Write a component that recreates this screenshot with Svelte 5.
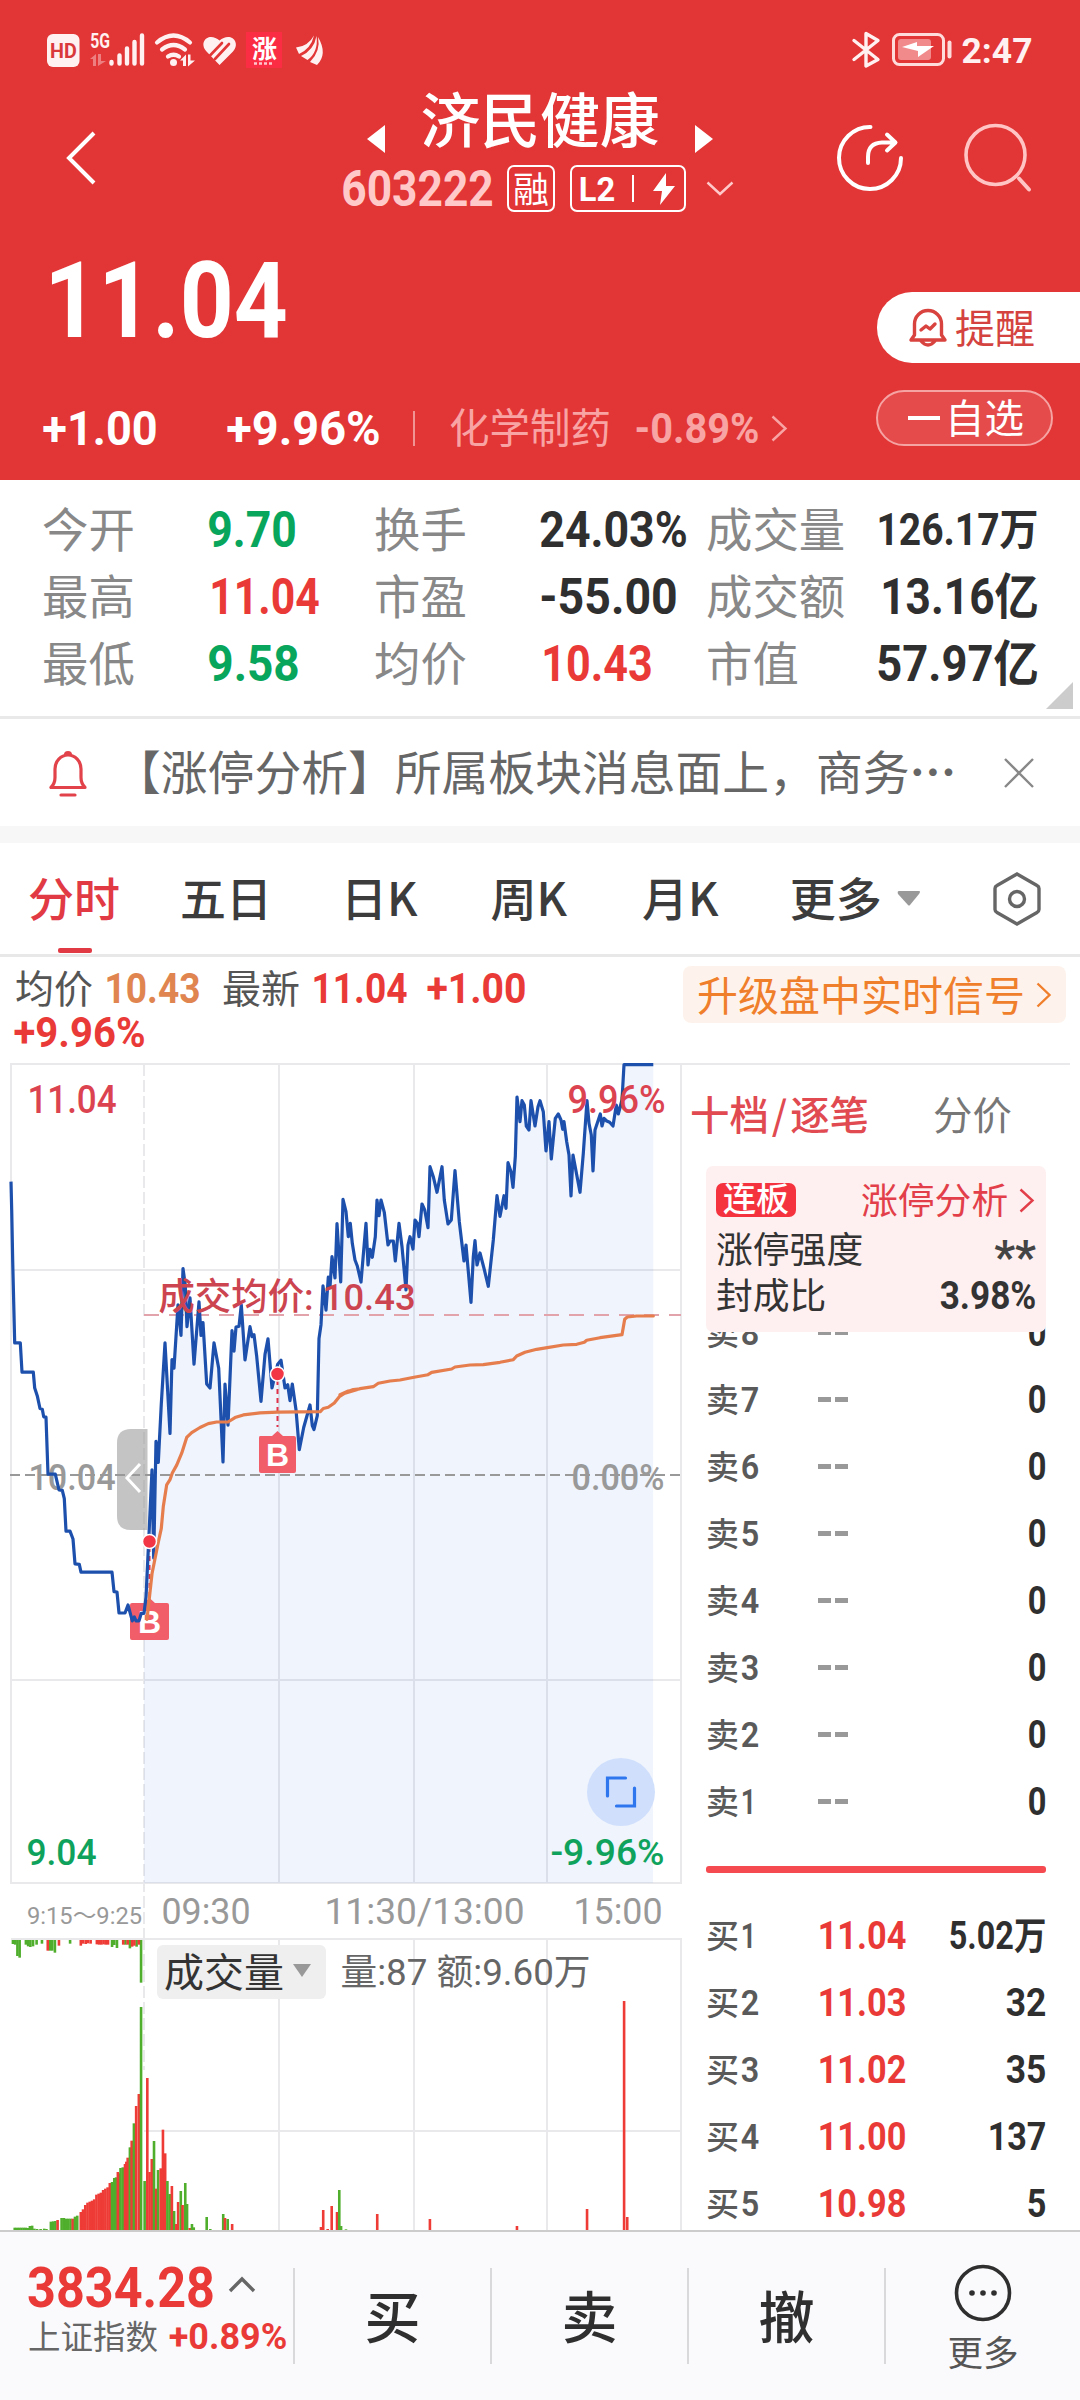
<script>
  const stats = [
    ['今开', '9.70', 86, 'down', '换手', '24.03%', 145, '', '成交量', '126.17万', 159, 31],
    ['最高', '11.04', 107, 'up one', '市盈', '-55.00', 135, '', '成交额', '13.16亿', 155, 35],
    ['最低', '9.58', 89, 'down', '均价', '10.43', 108, 'up one', '市值', '57.97亿', 159, 35]
  ];

  const asks = [8, 7, 6, 5, 4, 3, 2, 1];
  const bids = [
    [1, '11.04', '5.02万', 95],
    [2, '11.03', '32', 38],
    [3, '11.02', '35', 38],
    [4, '11.00', '137', 56],
    [5, '10.98', '5', 17]
  ];

  // Opening call auction and morning session, in plot units (x / 3, y / 2.529)
  const early =
    '33,358 35,430 38,560 44,766 61,766 66,840 100,840 104,880 112,900 120,932 127,934 131,953 138,954 144,1098 166,1098 177,1138 187,1139 193,1160 198,1242 210,1242 219,1262 225,1325 238,1326 243,1346 336,1346 342,1395 351,1396 357,1449 375,1449 384,1429 397,1469 403,1459 408,1469 417,1469 424,1450 432,1450';
  const morning =
    '438,1409 447,1250 456,1087 461,1310 468,1015 475,1068 484,920 495,766 510,995 516,808 522,830 534,670 543,747 549,578 556,620 561,725 570,652 582,820 597,662 603,747 609,715 620,870 630,880 642,766 656,830 669,1067 675,870 684,974 696,735 702,787 708,726 717,724 724,670 735,809 750,725 756,750 762,745 770,800 783,914 795,795 804,756 816,880 833,820 843,810 855,880 863,872 870,912 877,870 888,935 898,1036 911,980 930,923 937,975 942,985 952,950 957,755 963,720 969,622 978,683 985,600 990,625 996,548 1005,602 1011,464 1022,612 1029,403';
  const late =
    '138,515 145,590 151,550 157,610 165,660 172,678 183,726 198,550 204,675 210,628 217,652 226,590 231,480 237,527 243,480 253,517 264,615 270,603 280,603 286,663 297,550 306,620 318,750 324,615 330,590 339,627 345,540 352,550 357,590 366,492 374,510 384,563 390,380 400,410 411,457 426,380 433,480 444,552 454,540 465,392 478,545 492,663 498,615 513,787 520,650 525,602 531,675 540,639 552,685 565,739 580,600 591,467 600,529 612,467 618,505 624,368 633,395 639,442 646,350 651,171 660,245 666,182 673,195 679,258 687,270 693,182 705,258 714,200 720,182 730,215 738,333 747,245 754,357 766,235 775,222 783,240 788,268 792,245 800,305 807,345 813,468 819,345 840,457 850,340 861,182 867,250 874,285 879,393 885,270 901,222 906,258 912,235 920,243 929,247 939,258 949,195 955,222 966,180 972,74 1060,74';
  const avgA =
    '441,1465 456,1350 475,1270 484,1235 490,1180 500,1125 510,1112 517,1095 530,1075 545,1045 560,1005 575,993 600,980 625,970 650,966 684,966 705,955 730,948 780,943 833,941 961,940 970,932 985,929 1003,918 1018,902 1040,890 1060,884 1080,882';
  const avgB =
    '120,1064 145,1053 180,1046 220,1040 235,1030 270,1023 300,1020 342,1012 384,1004 395,997 455,987 465,981 510,975 550,974 600,967 640,959 650,948 675,937 710,928 742,923 790,915 830,913 853,907 860,901 900,893 966,884 974,838 982,831 1010,828 1060,828';

  const conv = (s, ox, kx, ky) =>
    s.split(' ').map((p) => {
      const [x, y] = p.split(',').map(Number);
      return `${(ox + x / kx).toFixed(1)},${(1040 + y / ky).toFixed(1)}`;
    });
  const A = (s) => conv(s, 0, 3, 2.529);
  const B = (s) => conv(s, 300, 3, 3);
  const session = [...A(morning), ...B(late)];
  const price = [...A(early), ...session].join(' ');
  const area = ['144,1883', '144,1613', ...session, '653,1883'].join(' ');
  const avg = [...A(avgA), ...B(avgB)].join(' ');

  // Volume bars: position, top, colour
  const bars = [];
  const add = (c, list) => list.split(' ').forEach((p) => {
    const [x, y] = p.split(',').map(Number);
    bars.push({ x: x / 2.24, y: 1860 + y / 3, c });
  });
  add('g', '33,1103 38,1103 43,1103 48,1103 53,1103 58,1103 63,1104 67,1098 72,1097 77,1106 83,1107 91,1107 99,1106 104,1107 114,1085 119,1084 124,1083 138,1074 143,1074 148,1076 153,1076 158,1076 168,1070 173,1067');
  add('r', '129,1080 163,1076 181,1056 186,1048 191,1035 196,1028 201,1025 206,1022 211,1018 216,1004 221,1001 226,998 231,990 236,986 241,982 246,969 264,936 280,912 286,893 295,842 305,738 311,702');
  add('g', '251,966 256,954 260,952 270,924 275,922 291,862 300,790 316,441 324,963');
  add('r', '283,905 268,940 330,654 335,936 340,897 350,986 360,925 365,809 370,880');
  add('g', '345,843 354,930 375,963 380,1002 390,1053 405,993 415,969 419,1032 430,1092 434,1102 463,1071 471,1107 500,1062 510,1077 760,990 764,1098 775,1108');
  add('r', '385,978 395,1092 399,1026 409,1035 425,1104 504,1074 520,1092 719,1101 724,1050 734,1107 743,1038 755,1056 845,1062 963,1077 1158,1098 1315,1047 1398,423 1405,1071');
  bars.sort((a, b) => a.x - b.x);

  // Unmatched auction volume, hanging from the top edge
  const hang = [];
  const addH = (c, list) => list.split(' ').forEach((p) => {
    const [x, y] = p.split(',').map(Number);
    hang.push({ x: x / 2.24, h: (y - 238) / 3, c });
  });
  addH('g', '29,250 34,252 39,286 44,291 58,252 63,257 68,259 74,257 82,252 94,249 112,270 117,270 123,276 157,249 251,259 256,253 262,262 281,252 291,263 306,258 316,366');
  addH('r', '107,270 132,255 181,255 186,249 192,250 197,248 203,249 217,251 222,252 227,252 232,251 237,252 242,252 276,252 286,252 296,258 301,255 311,252');
</script>

{#snippet num(text, w, h, cls = '', weight = 700)}
  {@const b = h * 0.05}
  <svg class="num {cls}" width={w} height={h}>
    <text x={-b} y={h} font-size={h / 0.711} font-weight={weight} textLength={w + 2 * b} lengthAdjust="spacingAndGlyphs">{text}</text>
  </svg>
{/snippet}

{#snippet lab(text, x, w, y, h, cls, weight = 500)}
  <text class="lab {cls}" x={x - h * 0.06} {y} font-size={h / 0.711} font-weight={weight} textLength={w + h * 0.12} lengthAdjust="spacingAndGlyphs">{text}</text>
{/snippet}

{#snippet chev(w, h, cls)}
  <svg class="chev {cls}" width={w} height={h} viewBox="0 0 {w} {h}"><path d="M1.5 1.5L{w - 1.5} {h / 2}L1.5 {h - 1.5}" /></svg>
{/snippet}

<div class="page">
  <header>
    <div class="status">
      <svg width="276" height="36" viewBox="47 32 276 36" fill="#fff1f1">
        <rect x="47" y="34" width="32.500" height="33" rx="6" />
        {@render lab('HD', 51, 25, 58, 15, 'hd', 700)}
        {@render lab('5G', 91, 18, 48, 14.5, 'soft', 700)}
        <g opacity=".4"><path d="M90 59l6-5v12h-3v-7zM98 54h3v7h5l-8 5z" /></g>
        <g stroke="#fff1f1" stroke-width="4.400" stroke-linecap="round">
          <path d="M111.500 62v1.500M119.500 55.500v8M127 48.500v15M134.500 42v21.500M142 35.500v28" />
        </g>
        <g fill="none" stroke="#fff1f1" stroke-width="4.200" stroke-linecap="round">
          <path d="M157 42.500q16.500-14 33 0M162 49.500q11.500-9 23 0M168 56.500q5.500-3.500 11 0" />
        </g>
        <circle cx="173.500" cy="62.500" r="3.500" />
        <path d="M180 60.500l6-6v11.500h-3v-5.500zM188 54.500h2.500v6h4.500l-7 6z" />
        <path d="M219.500 65l-13-13.500C200 44 205 37 211 37q4.500 0 8.500 3.500Q223.500 37 228 37c7 0 11 8 5 14.500z" />
        <path d="M222 43l-12 12.500M229 44l-14 15" stroke="#e23536" stroke-width="2.600" stroke-linecap="round" />
        <rect x="246" y="32" width="36" height="36" fill="#fb2d44" />
        <text x="252" y="58" class="app" font-size="25" font-weight="700">涨</text>
        <path d="M254 63.500h20" stroke="#ffc6cc" stroke-width="2.500" stroke-dasharray="3 2" />
        <path d="M296 47.500q12-1 18-12-3 13-15 18.500zM301 56q13-6 15.500-20 2 16-9 24zM310 62q11-11 8-25 10 17-1 28z" />
      </svg>
      <svg width="180" height="36" viewBox="852 32 180 36" fill="none">
        <path d="M854 40.500l24 19-12 6.500V33.500l12 7-24 19" stroke="#fff1f1" stroke-width="3.400" stroke-linejoin="round" stroke-linecap="round" />
        <rect x="893.500" y="34.500" width="50" height="30" rx="6" stroke="#ffdcdc" stroke-width="3" />
        <rect x="898" y="39" width="33" height="21" rx="3" fill="#f18b8b" />
        <path d="M902 47l15-5v4h17l-16 11v-6z" fill="#fff" />
        <path d="M949.500 42.500v14" stroke="#ffdcdc" stroke-width="4" stroke-linecap="round" />
        {@render lab('2:47', 963, 68, 62.5, 24.5, 'soft', 700)}
      </svg>
    </div>

    <div class="nav">
      <svg class="back" width="32" height="56" viewBox="0 0 32 56"><path d="M29 3L4 28l25 25" /></svg>
      <div class="title">
        <div class="name">
          <svg width="20" height="30" viewBox="0 0 20 30"><path d="M19 1v28L1 15z" /></svg>
          <h1>济民健康</h1>
          <svg width="20" height="30" viewBox="0 0 20 30"><path d="M1 1v28l18-14z" /></svg>
        </div>
        <div class="code">
          {@render num('603222', 149, 35, 'pale')}
          <span class="tag rong">融</span>
          <span class="tag l2">
            {@render num('L2', 34, 24)}
            <i></i>
            <svg width="24" height="32" viewBox="0 0 24 32"><path d="M14 0L1 18h9L8 32 23 13h-9z" fill="#fff" /></svg>
          </span>
          <svg class="dd" width="28" height="15" viewBox="0 0 28 15"><path d="M1.500 1.500L14 13 26.500 1.500" /></svg>
        </div>
      </div>
      <svg class="acts" width="196" height="70" viewBox="836 122 196 70" fill="none" stroke-linecap="round" stroke-linejoin="round">
        <path d="M870.500 127A31 31 0 1 0 901 158" stroke="#fff" stroke-width="4" />
        <path d="M868 163v-6q0-14 14-14.500h13M887 134.500l8.500 8-8.500 8" stroke="#fff" stroke-width="4" />
        <circle cx="995.500" cy="155" r="29.500" stroke="#ffc4c4" stroke-width="3.600" />
        <path d="M1019 178.500l10 11" stroke="#ffc4c4" stroke-width="4" />
      </svg>
    </div>

    <div class="quote">
      {@render num('11.04', 236, 75)}
      <div class="alert">
        <svg width="38" height="40" viewBox="0 0 38 40" fill="none" stroke="#d9433f" stroke-width="3.400" stroke-linecap="round" stroke-linejoin="round">
          <path d="M2 32h34l-3.500-5V16a13.500 13.500 0 0 0-27 0v11zM12 33q7 8 14 0M12 22l5-4 4 3 5-5" />
        </svg>
        <span>提醒</span>
      </div>
    </div>

    <div class="change">
      {@render num('+1.00', 112, 34, 'c1')}
      {@render num('+9.96%', 151, 34, 'c2')}
      <i></i>
      <span>化学制药</span>
      {@render num('-0.89%', 122, 30, 'c3')}
      {@render chev(16, 27, 'pinkc')}
      <div class="fav"><b></b><span>自选</span></div>
    </div>
  </header>

  <section class="stats">
    {#each stats as s}
      <span>{s[0]}</span>
      {@render num(s[1], s[2], 35, s[3])}
      <span>{s[4]}</span>
      {@render num(s[5], s[6], 35, s[7])}
      <span>{s[8]}</span>
      {@render num(s[9], s[10], s[11], 'last')}
    {/each}
    <svg class="corner" width="27" height="27"><path d="M27 0v27H0z" /></svg>
  </section>

  <section class="notice">
    <svg width="38" height="48" viewBox="0 0 38 48" fill="none" stroke="#e2434b" stroke-width="3.200" stroke-linejoin="round" stroke-linecap="round">
      <path d="M2 38.500h34q-4-4-4-10V20a13 14 0 0 0-26 0v8.500q0 6-4 10zM16.500 6a2.500 2.500 0 0 1 5 0M12 46h14" />
    </svg>
    <p lang="zh-CN">【涨停分析】所属板块消息面上，商务<b>…</b></p>
    <svg class="x" width="32" height="32" viewBox="0 0 32 32"><path d="M2 2l28 28M30 2L2 30" /></svg>
  </section>

  <nav class="tabs">
    <span class="on">分时</span>
    <span>五日</span>
    <span>日K</span>
    <span>周K</span>
    <span>月K</span>
    <span>更多</span>
    <svg width="24" height="17"><path d="M2 1h20q2 0 0 3l-9 11q-1 1-2 0L1 4q-1-3 1-3z" fill="#999" /></svg>
    <svg class="gear" width="50" height="56" viewBox="0 0 50 56"><path d="M25 3l20 11.500q2 1 2 3v21q0 2-2 3L25 53 5 41.500q-2-1-2-3v-21q0-2 2-3z" /><circle cx="25" cy="28" r="7.500" /></svg>
  </nav>

  <section class="info">
    <div class="line">
      <div class="first">
        <span>均价</span>
        {@render num('10.43', 93, 30, 'orange')}
        <span>最新</span>
        {@render num('11.04', 93, 30, 'up')}
        {@render num('+1.00', 97, 30, 'up plus')}
      </div>
      {@render num('+9.96%', 129, 30, 'up')}
    </div>
    <div class="signal"><span>升级盘中实时信号</span>{@render chev(15, 26, 'orangec')}</div>
  </section>

  <main>
    <div class="charts">
      <svg class="pricechart" width="690" height="878" viewBox="0 1060 690 878">
        <g class="grid">
          <path d="M11 1064H681V1883H11zM144 1270H681M11 1270H144M11 1680H681M279 1064V1883M414 1064V1883M547 1064V1883" />
          <path d="M144 1064V1938" stroke-dasharray="12 4" />
          <path d="M681 1064H1070" />
        </g>
        <polygon points={area} fill="#2c6ae0" fill-opacity=".075" />
        <path d="M10 1475H681" stroke="#999" stroke-width="2" stroke-dasharray="10 5" />
        {@render lab('11.04', 29, 86, 1112.5, 27, 'red')}
        {@render lab('10.04', 30, 84, 1490, 26, 'gray')}
        {@render lab('9.04', 28, 67, 1865, 26, 'green')}
        {@render lab('0.00%', 573, 90, 1490, 26, 'gray')}
        {@render lab('-9.96%', 552, 111, 1865, 26, 'green')}
        <path d="M144 1315H681" stroke="#e3a3aa" stroke-width="2" stroke-dasharray="15 10" />
        <g class="mark">
          <path d="M149.500 1547V1598M277.500 1380V1427" stroke="#e0304a" stroke-width="2" stroke-dasharray="5 4" />
          <path d="M132 1603h12l5.500-5 5.500 5h12q2 0 2 2v33q0 2-2 2h-35q-2 0-2-2v-33q0-2 2-2z" />
          <path d="M261 1436h11l5.500-5 5.500 5h11q2 0 2 2v33q0 2-2 2h-33q-2 0-2-2v-33q0-2 1-2z" />
          <text x="149.500" y="1633">B</text>
          <text x="277.500" y="1466">B</text>
        </g>
        <polyline points={price} fill="none" stroke="#1d50ad" stroke-width="3.200" stroke-linejoin="round" />
        <polyline points={avg} fill="none" stroke="#e57d4d" stroke-width="3.200" stroke-linejoin="round" stroke-linecap="round" />
        <g fill="#f23645" stroke="#fff" stroke-width="1.500"><circle cx="149.500" cy="1541.500" r="7" /><circle cx="277.500" cy="1374" r="7" /></g>
        {@render lab('9.96%', 569, 95, 1112.5, 27, 'red')}
        {@render lab('成交均价: 10.43', 160, 254, 1309.5, 26.500, 'cost')}
        <path d="M147.500 1429V1530H131q-14 0-14-14v-73q0-14 14-14z" fill="#999" fill-opacity=".58" />
        <path d="M140 1464l-13 14 13 14" fill="none" stroke="#fff" stroke-width="3" />
        <circle cx="621" cy="1792" r="34" fill="#d0dffc" />
        <path d="M607.500 1796v-18h18M634.500 1788v18h-18" fill="none" stroke="#2e76ee" stroke-width="3.200" stroke-linecap="round" />
        {@render lab('9:15～9:25', 28, 113, 1924, 17, 'gray', 400)}
        {@render lab('09:30', 163, 86, 1923.5, 26, 'gray', 400)}
        {@render lab('11:30/13:00', 326, 197, 1923.5, 26, 'gray', 400)}
        {@render lab('15:00', 575, 86, 1923.5, 26, 'gray', 400)}
      </svg>
      <div class="volume">
        <svg width="690" height="292" viewBox="0 1938 690 292">
          <g class="grid">
            <path d="M11 1939H681V2240M144 2131H681M279 1938V2230M414 1938V2230M547 1938V2230" />
            <path d="M144 1938V2070" stroke-dasharray="12 4" />
          </g>
          {#each hang as h}<rect class={h.c} x={h.x - 1.3} y="1940" width="2.600" height={h.h} />{/each}
          {#each bars as b}<rect class={b.c} x={b.x - 1.3} y={b.y} width="2.600" height={2230 - b.y} />{/each}
        </svg>
        <div class="legend">
          <div class="chip">成交量 <svg width="18" height="13"><path d="M0 0h18L9 13z" fill="#999" /></svg></div>
          <svg width="250" height="54" class="vtext">{@render lab('量:87 额:9.60万', 1, 247, 39.5, 26, 'dim', 400)}</svg>
        </div>
      </div>
    </div>

    <aside>
      <div class="modes"><span class="on">十档<em>/</em>逐笔</span><span>分价</span></div>
      <div class="card">
        <div class="r1"><span class="badge">连板</span><span class="red">涨停分析</span>{@render chev(15, 25, 'redc')}</div>
        <div class="r2"><span>涨停强度</span><b>**</b></div>
        <div class="r3"><span>封成比</span>{@render num('3.98%', 94, 27)}</div>
      </div>
      <div class="book">
        {#each asks as n}
          <div class="row"><span>卖</span>{@render num(String(n), n === 1 ? 13 : 16, 25, n === 1 ? 'lvl one1' : 'lvl', 600)}<i></i><i></i>{@render num('0', 16, 27, 'vol')}</div>
        {/each}
        <hr />
        {#each bids as [n, p, v, w]}
          <div class="row"><span>买</span>{@render num(String(n), n === 1 ? 13 : 16, 25, n === 1 ? 'lvl one1' : 'lvl', 600)}{@render num(p, 86, 27, 'up px')}{@render num(v, w, 27, 'vol')}</div>
        {/each}
      </div>
    </aside>
  </main>

  <footer>
    <div class="index">
      <div class="i1">{@render num('3834.28', 184, 40, 'up')}<svg width="28" height="17" viewBox="0 0 28 17"><path d="M2 15L14 3l12 12" /></svg></div>
      <div class="i2"><span>上证指数</span>{@render num('+0.89%', 116, 26, 'up')}</div>
    </div>
    <button>买</button>
    <button>卖</button>
    <button>撤</button>
    <div class="more">
      <svg width="58" height="58" viewBox="0 0 58 58"><circle cx="29" cy="29" r="26.500" fill="none" stroke="#2f2f2f" stroke-width="3.600" /><g fill="#2f2f2f"><circle cx="18" cy="29" r="2.800" /><circle cx="29" cy="29" r="2.800" /><circle cx="40" cy="29" r="2.800" /></g></svg>
      <span>更多</span>
    </div>
  </footer>
</div>

<style>
  :global(body) { background: #fff; }
  .page { width: 1080px; height: 2400px; overflow: hidden; background: #fff; display: flex; flex-direction: column; font-family: 'Noto Sans CJK SC', sans-serif; color: #2f2f2f; line-height: 1; }
  .page * { box-sizing: border-box; }
  svg { display: block; flex: none; overflow: visible; }
  span, p, h1 { white-space: nowrap; margin: 0; flex: none; }
  .num { fill: currentColor; font-family: Roboto, 'Noto Sans CJK SC', sans-serif; }
  .lab { font-family: Roboto, 'Noto Sans CJK SC', sans-serif; }
  .up { color: #ea3a38; }
  .down { color: #08a55c; }
  .chev path { fill: none; stroke: currentColor; stroke-width: 2.4; }

  header { height: 480px; flex: none; background: #e23536; color: #fff; display: flex; flex-direction: column; }
  .status { height: 100px; padding: 0 48px 0 47px; display: flex; justify-content: space-between; align-items: center; }
  .hd { fill: #d9393b; }
  .soft { fill: #fff1f1; }
  .app { fill: #fff; }
  .nav { height: 130px; display: flex; padding-left: 65px; }
  .back { margin-top: 30px; }
  .back path { fill: none; stroke: #fff; stroke-width: 4; }
  .title { margin-left: 246px; width: 391px; }
  .name { height: 60px; margin-top: -11px; padding: 0 20px 0 23px; display: flex; justify-content: space-between; align-items: flex-end; }
  .name h1 { font-size: 60px; font-weight: 500; height: 62px; line-height: 60px; letter-spacing: -.3px; }
  .name svg { fill: #fff; margin-bottom: -5px; }
  .code { height: 47px; margin-top: 16px; display: flex; align-items: center; }
  .pale { color: #ffc9c9; }
  .tag { height: 47px; border: 2px solid #fff; border-radius: 7px; display: flex; align-items: center; }
  .rong { width: 48px; margin-left: 15px; justify-content: center; font-size: 36px; padding-bottom: 4px; }
  .l2 { width: 116px; margin-left: 15px; padding-left: 8px; }
  .l2 i { width: 2px; height: 27px; background: #fff; margin: 0 18px 0 18px; }
  .dd { margin-left: 20px; }
  .dd path { fill: none; stroke: #ffc9c9; stroke-width: 2.400; }
  .acts { margin: 22px 0 0 102px; }
  .quote { height: 160px; display: flex; justify-content: space-between; align-items: flex-start; padding: 32px 0 0 48px; }
  .alert { width: 203px; height: 71px; margin-top: 30px; background: #fff; border-radius: 35px 0 0 35px; display: flex; align-items: center; padding-left: 32px; gap: 8px; color: #d4433f; font-size: 40px; }
  .alert span { padding-bottom: 4px; }
  .change { height: 76px; display: flex; align-items: center; padding-left: 44px; }
  .c2 { margin-left: 72px; }
  .change i { width: 2px; height: 35px; background: #f19494; margin: 0 34px; }
  .change span { font-size: 40.500px; color: #f9a4a4; padding-bottom: 4px; }
  .c3 { margin-left: 25px; color: #f9a4a4; }
  .pinkc { color: #f9a4a4; margin-left: 13px; }
  .fav { width: 177px; height: 56px; margin: -20px 0 0 auto; margin-right: 27px; border: 2px solid #f5a3a3; border-radius: 28px; background: #e64b4c; display: flex; align-items: center; padding-left: 30px; gap: 5px; }
  .fav b { width: 32px; height: 4px; background: #fff; }
  .change .fav span { color: #fff; font-size: 39.500px; }

  .stats { height: 239px; flex: none; border-bottom: 3px solid #e9e9e9; padding: 16px 0 0 42px; display: grid; grid-template-columns: 167px 165px 167px 165px 171px 160px; grid-template-rows: repeat(3, 67px); align-items: center; position: relative; }
  .stats span { font-size: 46.400px; color: #888; padding-bottom: 4px; }
  .stats .last { justify-self: end; }
  .one { margin-left: 2px; }
  .corner { position: absolute; right: 7px; bottom: 7px; fill: #ccc; }

  .notice { height: 107px; flex: none; display: flex; align-items: center; padding-left: 49px; color: #666; }
  .notice p { font-size: 46.800px; margin-left: 27px; padding-bottom: 5px; }
  .notice b { font-weight: 700; }
  .x { margin-left: auto; margin-right: 45px; }
  .x path { fill: none; stroke: #888; stroke-width: 2.400; }

  .tabs { height: 131px; flex: none; border-top: 17px solid #f7f7f7; border-bottom: 3px solid #e8e8e8; display: flex; align-items: center; padding-left: 28px; font-size: 46px; color: #3c3c3c; font-weight: 500; }
  .tabs span { position: relative; padding-bottom: 5px; margin-right: 60px; }
  .tabs span:nth-child(3) { margin-left: 9px; margin-right: 73px; }
  .tabs span:nth-child(4) { margin-right: 75px; }
  .tabs span:nth-child(5) { margin-right: 71px; }
  .tabs span:nth-child(6) { margin-right: 15px; }
  .tabs .on { color: #e23a44; }
  .tabs .on::after { content: ''; position: absolute; left: 30px; bottom: -29px; width: 34px; height: 5px; border-radius: 2px; background: #e23a44; }
  .gear { margin-left: 71px; fill: none; stroke: #666; stroke-width: 3.400; }

  .info { height: 103px; flex: none; display: flex; justify-content: space-between; align-items: flex-start; padding: 9px 14px 0 15px; }
  .line { width: 560px; display: flex; flex-direction: column; font-size: 39px; color: #555; gap: 7px; }
  .first { height: 44px; display: flex; align-items: center; }
  .line span { margin-right: 13px; padding-bottom: 4px; }
  .orange { color: #e0854f; margin-right: 23px; }
  .plus { margin-left: 22px; }
  .signal { width: 383px; height: 57px; border-radius: 8px; background: #fef3ec; color: #f07f2c; display: flex; align-items: center; padding-left: 14px; font-size: 41px; }
  .signal span { padding-bottom: 2px; }
  .orangec { margin-left: 11px; }

  main { height: 1170px; flex: none; display: flex; overflow: hidden; }
  .charts { width: 690px; flex: none; }
  .grid path { fill: none; stroke: #e9e9eb; stroke-width: 2; }
  .red { fill: #dc4350; color: #e23f4a; }
  .gray { fill: #999; }
  .green { fill: #0ea25c; }
  .cost { fill: #cc4450; }
  .dim { fill: #666; }
  .mark path:not(:first-child) { fill: #f15d69; }
  .mark text { fill: #fff; font: 700 32px 'Liberation Sans', sans-serif; text-anchor: middle; }
  .volume { position: relative; }
  .g { fill: #4fae2c; }
  .r { fill: #ee3b36; }
  .legend { position: absolute; left: 157px; top: 7px; display: flex; gap: 26px; }
  .chip { width: 169px; height: 54px; border-radius: 6px; background: #efefef; color: #333; font-size: 40px; display: flex; align-items: center; gap: 9px; padding: 0 0 4px 7px; }
  .vtext { margin-left: -11px; }

  aside { width: 390px; display: flex; flex-direction: column; margin-top: 4px; }
  .modes { height: 102px; flex: none; display: flex; align-items: center; font-size: 39.400px; color: #777; padding-bottom: 5px; }
  .modes .on { color: #e04a50; width: 243px; font-weight: 500; }
  .modes em { font-style: normal; margin: 0 3px; display: inline-block; }
  .card { position: relative; z-index: 1; margin-left: 16px; width: 340px; height: 166px; flex: none; border-radius: 7px; background: #fef0f0; padding: 17px 11px 0 10px; color: #333; font-size: 36.800px; }
  .r1 { height: 34px; display: flex; align-items: center; }
  .badge { width: 80px; height: 34px; border-radius: 7px; background: #f4333f; color: #fff; font-size: 33px; font-weight: 500; padding-left: 7px; line-height: 29px; margin-right: 65px; }
  .r1 .red { padding-bottom: 4px; }
  .redc { color: #e23f4a; margin-left: 11px; }
  .r2, .r3 { display: flex; justify-content: space-between; align-items: center; height: 45px; }
  .r2 { margin-top: 10px; }
  .r3 { margin-top: 1px; }
  .r2 b { font: 700 46px/45px Roboto, sans-serif; height: 45px; padding-top: 8px; color: #444; margin-right: -1px; }
  .r2 span, .r3 span { padding-bottom: 4px; }
  .book { margin: -33px 0 0 16px; width: 340px; }
  .row { height: 67px; display: flex; align-items: center; color: #5a5a5a; font-size: 33px; font-weight: 500; }
  .row span { padding-bottom: 2px; width: 36px; }
  .row i { width: 13px; height: 5px; background: #999; margin-right: 4px; }
  .row .lvl + i { margin-left: 60px; }
  .row .one1 { margin: 0 3px 0 0; }
  .row .px { margin-left: 61px; margin-right: -2px; }
  .row .vol { margin-left: auto; margin-right: 1px; color: #2f2f2f; }
  hr { height: 7px; border: 0; border-radius: 3px; background: #f44a50; margin: 31px 0 29px; }

  footer { height: 170px; flex: none; background: #fafafc; border-top: 2px solid #ccc; display: flex; align-items: flex-start; padding-top: 36px; }
  .index { width: 295px; height: 96px; border-right: 2px solid #d9d9dc; padding-left: 29px; flex: none; }
  .i1 { display: flex; gap: 15px; margin-top: -1px; }
  .i1 svg:last-child { margin-top: 9px; fill: none; stroke: #666; stroke-width: 3.400; }
  .i2 { display: flex; align-items: center; margin-top: 12px; font-size: 32.500px; color: #666; gap: 12px; }
  .i2 span { padding-bottom: 2px; margin-left: -1px; }
  button { width: 197px; height: 96px; border: 0; border-right: 2px solid #d9d9dc; background: none; padding: 0 0 4px; font: 500 56px/1 'Noto Sans CJK SC', sans-serif; color: #2f2f2f; flex: none; }
  .more { flex: 1; display: flex; flex-direction: column; align-items: center; margin-top: -4px; font-size: 35.500px; color: #555; gap: 11px; }
</style>
